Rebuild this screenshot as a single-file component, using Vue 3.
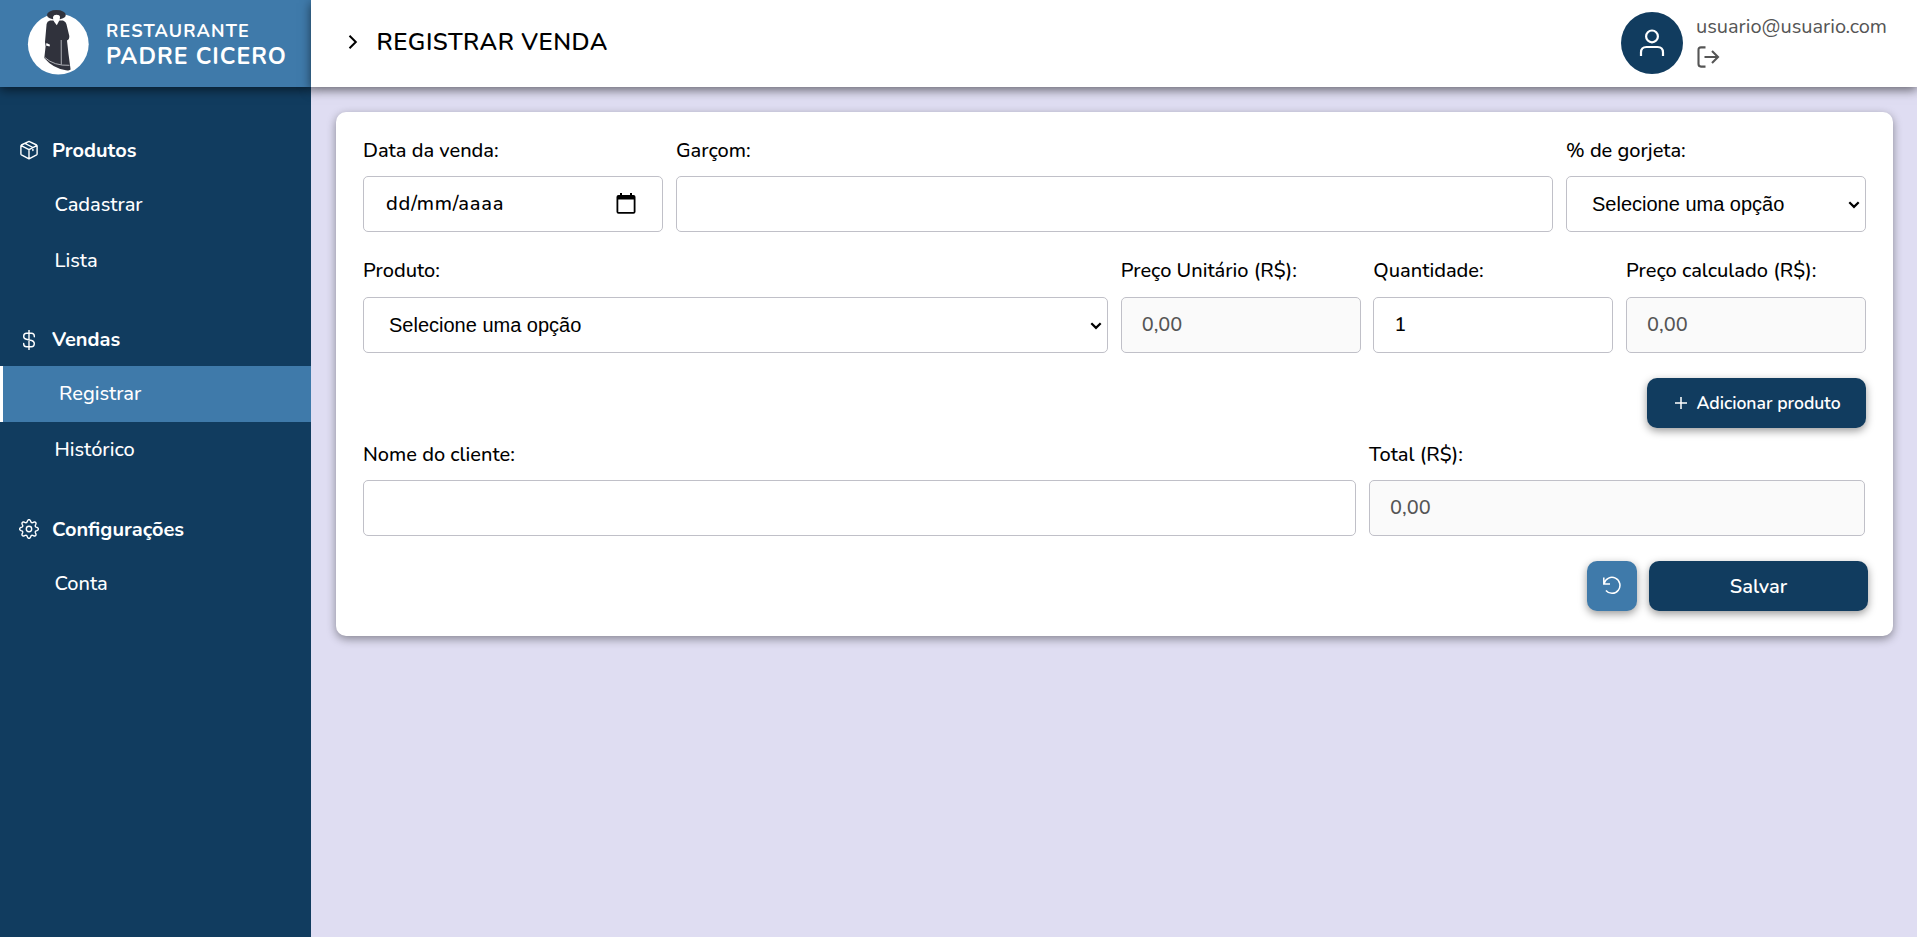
<script setup>
import { ref } from 'vue'

const groups = [
  { title: 'Produtos', icon: 'box', items: [{ label: 'Cadastrar' }, { label: 'Lista' }] },
  { title: 'Vendas', icon: 'dollar', items: [{ label: 'Registrar', active: true }, { label: 'Histórico' }] },
  { title: 'Configurações', icon: 'gear', items: [{ label: 'Conta' }] },
]

const rows = [
  {
    name: 'sale',
    fields: [
      { label: 'Data da venda:', type: 'date', hint: 'dd/mm/aaaa' },
      { label: 'Garçom:', type: 'text' },
      { label: '% de gorjeta:', type: 'select' },
    ],
  },
  {
    name: 'product',
    fields: [
      { label: 'Produto:', type: 'select' },
      { label: 'Preço Unitário (R$):', type: 'readonly', hint: '0,00' },
      { label: 'Quantidade:', type: 'text', value: '1' },
      { label: 'Preço calculado (R$):', type: 'readonly', hint: '0,00' },
    ],
  },
  {
    name: 'client',
    fields: [
      { label: 'Nome do cliente:', type: 'text' },
      { label: 'Total (R$):', type: 'readonly', hint: '0,00' },
    ],
  },
]

const email = ref('usuario@usuario.com')

// Outline of an eight-toothed gear around (10, 10)
const gearPath = 'M' + Array.from({ length: 96 }, (_, i) => {
  const a = (i / 96) * Math.PI * 2
  const wave = Math.cos(8 * a)
  const r = 8.1 + 1.25 * Math.sign(wave) * Math.pow(Math.abs(wave), 0.7)
  return (10 + r * Math.cos(a)).toFixed(2) + ' ' + (10 + r * Math.sin(a)).toFixed(2)
}).join(' L') + 'Z'
</script>

<template>
  <div class="app">
    <aside class="sidebar">
      <div class="brand">
        <svg class="logo" viewBox="26 8 66 68" width="66" height="68">
          <circle cx="58.3" cy="44.2" r="30.4" fill="#fff" />
          <g fill="#30323c">
            <ellipse cx="56.4" cy="14.9" rx="9.4" ry="4.9" />
            <path d="M50 20.5 L63 20.5 Q66 21.5 66.4 24 L69.3 36 Q69.5 39.5 67 40.5 L68.5 54 L70.6 69.6 Q70 70.8 66 70.2 Q53 68.500 44.300 58 L45.600 46.500 L45 42 L46.600 24 Q47 21.200 50 20.500Z" />
          </g>
          <path d="M53 17 Q53.500 14.800 56.500 14.800 Q59.800 14.800 60 17 Q60 20 58.500 22 L56.800 25.200 L54.300 22 Q52.800 20 53 17Z" fill="#fff" />
          <path d="M46.500 43 L50 44.800 L49.500 46.500 L46 45.500Z" fill="#fff" />
          <path d="M61.200 40 L61.300 64.500 M44.800 57.500 Q54 66 69.500 65.300" fill="none" stroke="#d8dade" stroke-width=".75" />
        </svg>
        <div class="brand-text">
          <span class="brand-top">RESTAURANTE</span>
          <span class="brand-name">PADRE CICERO</span>
        </div>
      </div>

      <nav class="menu">
        <section v-for="g in groups" :key="g.title" class="group">
          <h2 class="group-title">
            <svg class="group-icon" viewBox="0 0 20 20" width="20" height="20">
              <path v-if="g.icon === 'box'" d="M10 1.400 L17.600 5 Q18.100 5.300 18.100 5.900 V14 Q18.100 14.600 17.600 14.900 L10 18.800 L2.400 14.900 Q1.900 14.600 1.900 14 V5.900 Q1.900 5.300 2.400 5Z M2.200 5.600 L10 9.700 L17.800 5.600 M10 9.700 V18.500 M5.900 3.400 L13.900 7.500 V10.600" />
              <path v-else-if="g.icon === 'dollar'" d="M10 .3 V19.700 M15.300 6.800 V6 Q15.300 3.200 12.400 3.200 H7.600 Q4.700 3.200 4.700 6.200 Q4.700 8.700 7.300 9.300 L12.600 10.500 Q15.300 11.200 15.300 13.700 Q15.300 16.700 12.400 16.700 H7.600 Q4.700 16.700 4.700 13.900 V13.400" />
              <g v-else>
                <circle cx="10" cy="10" r="2.700" />
                <path :d="gearPath" />
              </g>
            </svg>
            <span>{{ g.title }}</span>
          </h2>
          <a v-for="i in g.items" :key="i.label" class="item" :class="{ active: i.active }">{{ i.label }}</a>
        </section>
      </nav>
    </aside>

    <div class="main">
      <header class="topbar">
        <svg class="crumb" viewBox="0 0 10 16" width="10" height="16">
          <path d="M1.500 1.800 L7.800 8 L1.500 14.200" />
        </svg>
        <h1 class="title">REGISTRAR VENDA</h1>
        <div class="user">
          <div class="avatar">
            <svg viewBox="0 0 28 30" width="28" height="30">
              <circle cx="14" cy="8.400" r="5.900" />
              <path d="M3 28 V24.500 Q3 19 8.500 19 H19.500 Q25 19 25 24.500 V28" />
            </svg>
          </div>
          <div class="user-info">
            <span class="email">{{ email }}</span>
            <svg class="logout" viewBox="0 0 24 22" width="24" height="22">
              <path d="M9.500 1.400 H5 Q2.500 1.400 2.500 3.900 V18.100 Q2.500 20.600 5 20.600 H9.500 M8.500 11 H22 M16 5 L22 11 L16 17" />
            </svg>
          </div>
        </div>
      </header>

      <form class="card" @submit.prevent>
        <template v-for="r in rows" :key="r.name">
          <div class="row" :class="r.name">
            <label v-for="f in r.fields" :key="f.label" class="field">
              <span class="label">{{ f.label }}</span>
              <span class="control">
                <select v-if="f.type === 'select'" class="input select">
                  <option>Selecione uma opção</option>
                </select>
                <input
                  v-else class="input" :class="f.type" type="text"
                  :placeholder="f.hint" :value="f.value" :readonly="f.type === 'readonly'"
                >
                <svg v-if="f.type === 'select'" class="caret" viewBox="0 0 12 8" width="12" height="8">
                  <path d="M1.300 1.200 L6 5.900 L10.700 1.200" />
                </svg>
                <svg v-if="f.type === 'date'" class="calendar" viewBox="0 0 20 21" width="20" height="21">
                  <path fill-rule="evenodd" d="M4 0 H6 V2 H14 V0 H16 V2 H17.500 Q19.500 2 19.500 4 V18.700 Q19.500 20.700 17.500 20.700 H2.500 Q.5 20.700 .5 18.700 V4 Q.5 2 2.500 2 H4Z M2.300 6.600 V18.900 H17.700 V6.600Z" />
                </svg>
              </span>
            </label>
          </div>
          <div v-if="r.name === 'product'" class="add-row">
            <button class="btn add" type="button">
              <svg viewBox="0 0 12 12" width="12" height="12"><path d="M6 0 V12 M0 6 H12" /></svg>
              <span>Adicionar produto</span>
            </button>
          </div>
        </template>

        <div class="actions">
          <button class="btn reset" type="reset" aria-label="Limpar">
            <svg viewBox="0 0 20 20" width="20" height="20">
              <path d="M1.800 1.500 V7.900 H8 M2.200 7.400 A8 8 0 1 1 3.900 14.600" />
            </svg>
          </button>
          <button class="btn save" type="submit">Salvar</button>
        </div>
      </form>
    </div>
  </div>
</template>

<style>
html, body { margin: 0; background: #dfddf2; }
</style>

<style scoped>
.app {
  display: flex;
  height: 100vh;
  overflow: hidden;
  background: #dfddf2;
  color: #000;
  font-family: Nunito, Lato, "Noto Sans", sans-serif;
  font-size: 20px;
  font-weight: 500;
}
svg { display: block; flex: none; }
.sidebar { flex: none; width: 311px; background: #113c5f; color: #fff; }
.brand {
  box-sizing: border-box;
  display: flex;
  height: 87px;
  padding: 8px 0 0 26px;
  background: #3f7aaa;
  box-shadow: 0 3px 10px rgba(0, 0, 0, .55);
}
.brand-text { display: flex; flex-direction: column; margin: 10px 0 0 14px; font-weight: 700; white-space: nowrap; }
.brand-top { font-size: 18px; line-height: 26px; letter-spacing: 1.150px; }
.brand-name { font-size: 23px; line-height: 25px; letter-spacing: 1px; }
.menu { padding-top: 37px; }
.group { margin-bottom: 25px; }
.group-title {
  display: flex;
  align-items: center;
  gap: 13px;
  box-sizing: border-box;
  height: 52.600px;
  margin: 0;
  padding-left: 19px;
  font-size: 20px;
  font-weight: 700;
}
.group-icon { fill: none; stroke: #fff; stroke-width: 1.400; stroke-linecap: round; stroke-linejoin: round; }
.item {
  display: block;
  box-sizing: border-box;
  height: 56px;
  padding-left: 54.500px;
  line-height: 56px;
}
.item.active { border-left: 3px solid #fff; padding-left: 56px; background: #3f7aaa; }

.main { flex: 1; min-width: 0; }
.topbar {
  box-sizing: border-box;
  display: flex;
  align-items: center;
  height: 87px;
  padding: 0 30px 0 37px;
  background: #fff;
  box-shadow: 0 3px 10px rgba(0, 0, 0, .55);
}
.crumb { margin-bottom: 4px; fill: none; stroke: #000; stroke-width: 2; }
.title {
  flex: 1;
  margin: 0 0 3px 18.500px;
  font-size: 24px;
  font-weight: 600;
  line-height: 30px;
  letter-spacing: .500px;
}
.user { display: flex; align-items: center; gap: 13px; height: 62px; margin-bottom: 2px; }
.avatar {
  display: flex;
  align-items: center;
  justify-content: center;
  width: 62px;
  height: 62px;
  border-radius: 50%;
  background: #113c5f;
}
.avatar svg { fill: none; stroke: #fff; stroke-width: 2.200; }
.user-info { display: flex; flex-direction: column; gap: 7px; height: 56px; }
.email { color: #555; font-weight: 400; line-height: 24px; }
.logout { fill: none; stroke: #555; stroke-width: 2.100; }

.card {
  margin: 25px 24px 0 25px;
  padding: 25px 27px;
  border-radius: 10px;
  background: #fff;
  box-shadow: 0 3px 10px rgba(0, 0, 0, .4);
}
.row { display: grid; gap: 13px; }
.sale { grid-template-columns: 300px 1fr 300px; }
.product { grid-template-columns: 1fr 240px 240px 240px; gap: 12.670px; margin-top: 25px; }
.client { grid-template-columns: 993px 1fr; margin: 13px 1px 0 0; }
.field { min-width: 0; }
.label { display: block; margin-bottom: 12px; line-height: 27px; white-space: nowrap; }
.product .label { margin-bottom: 13px; }
.control { display: block; position: relative; }
.input {
  display: block;
  box-sizing: border-box;
  width: 100%;
  height: 56px;
  margin: 0;
  padding: 0 20px 2px;
  border: 1px solid #c0c0c8;
  border-radius: 5px;
  outline: 0;
  background: #fff;
  color: #000;
  font: inherit;
}
.input::placeholder { color: #000; opacity: 1; }
.input.date { padding-left: 22px; letter-spacing: .850px; }
.input.readonly { background: #fafafa; }
.input.readonly::placeholder { color: #555; }
.input.select {
  appearance: none;
  padding: 0 25px;
  font: 400 20px "Liberation Sans", Arial, sans-serif;
}
.caret { position: absolute; right: 6px; top: 25px; fill: none; stroke: #000; stroke-width: 2.200; }
.calendar { position: absolute; right: 27px; top: 17px; fill: #000; }

.add-row { display: flex; justify-content: flex-end; margin-top: 25px; }
.btn {
  display: flex;
  align-items: center;
  justify-content: center;
  height: 50px;
  padding: 0;
  border: 0;
  border-radius: 10px;
  background: #113c5f;
  color: #fff;
  font: 600 20px Nunito, Lato, "Noto Sans", sans-serif;
  box-shadow: 0 3px 8px rgba(0, 0, 0, .4);
}
.btn svg { fill: none; stroke: #fff; stroke-width: 1.500; }
.add { gap: 9px; width: 219px; padding-left: 3px; font-size: 17.600px; }
.actions { display: flex; justify-content: flex-end; gap: 12px; margin: 25px -2px 0 0; }
.reset { width: 50px; padding-right: 1px; background: #3f7aaa; }
.save { width: 219px; }
</style>
